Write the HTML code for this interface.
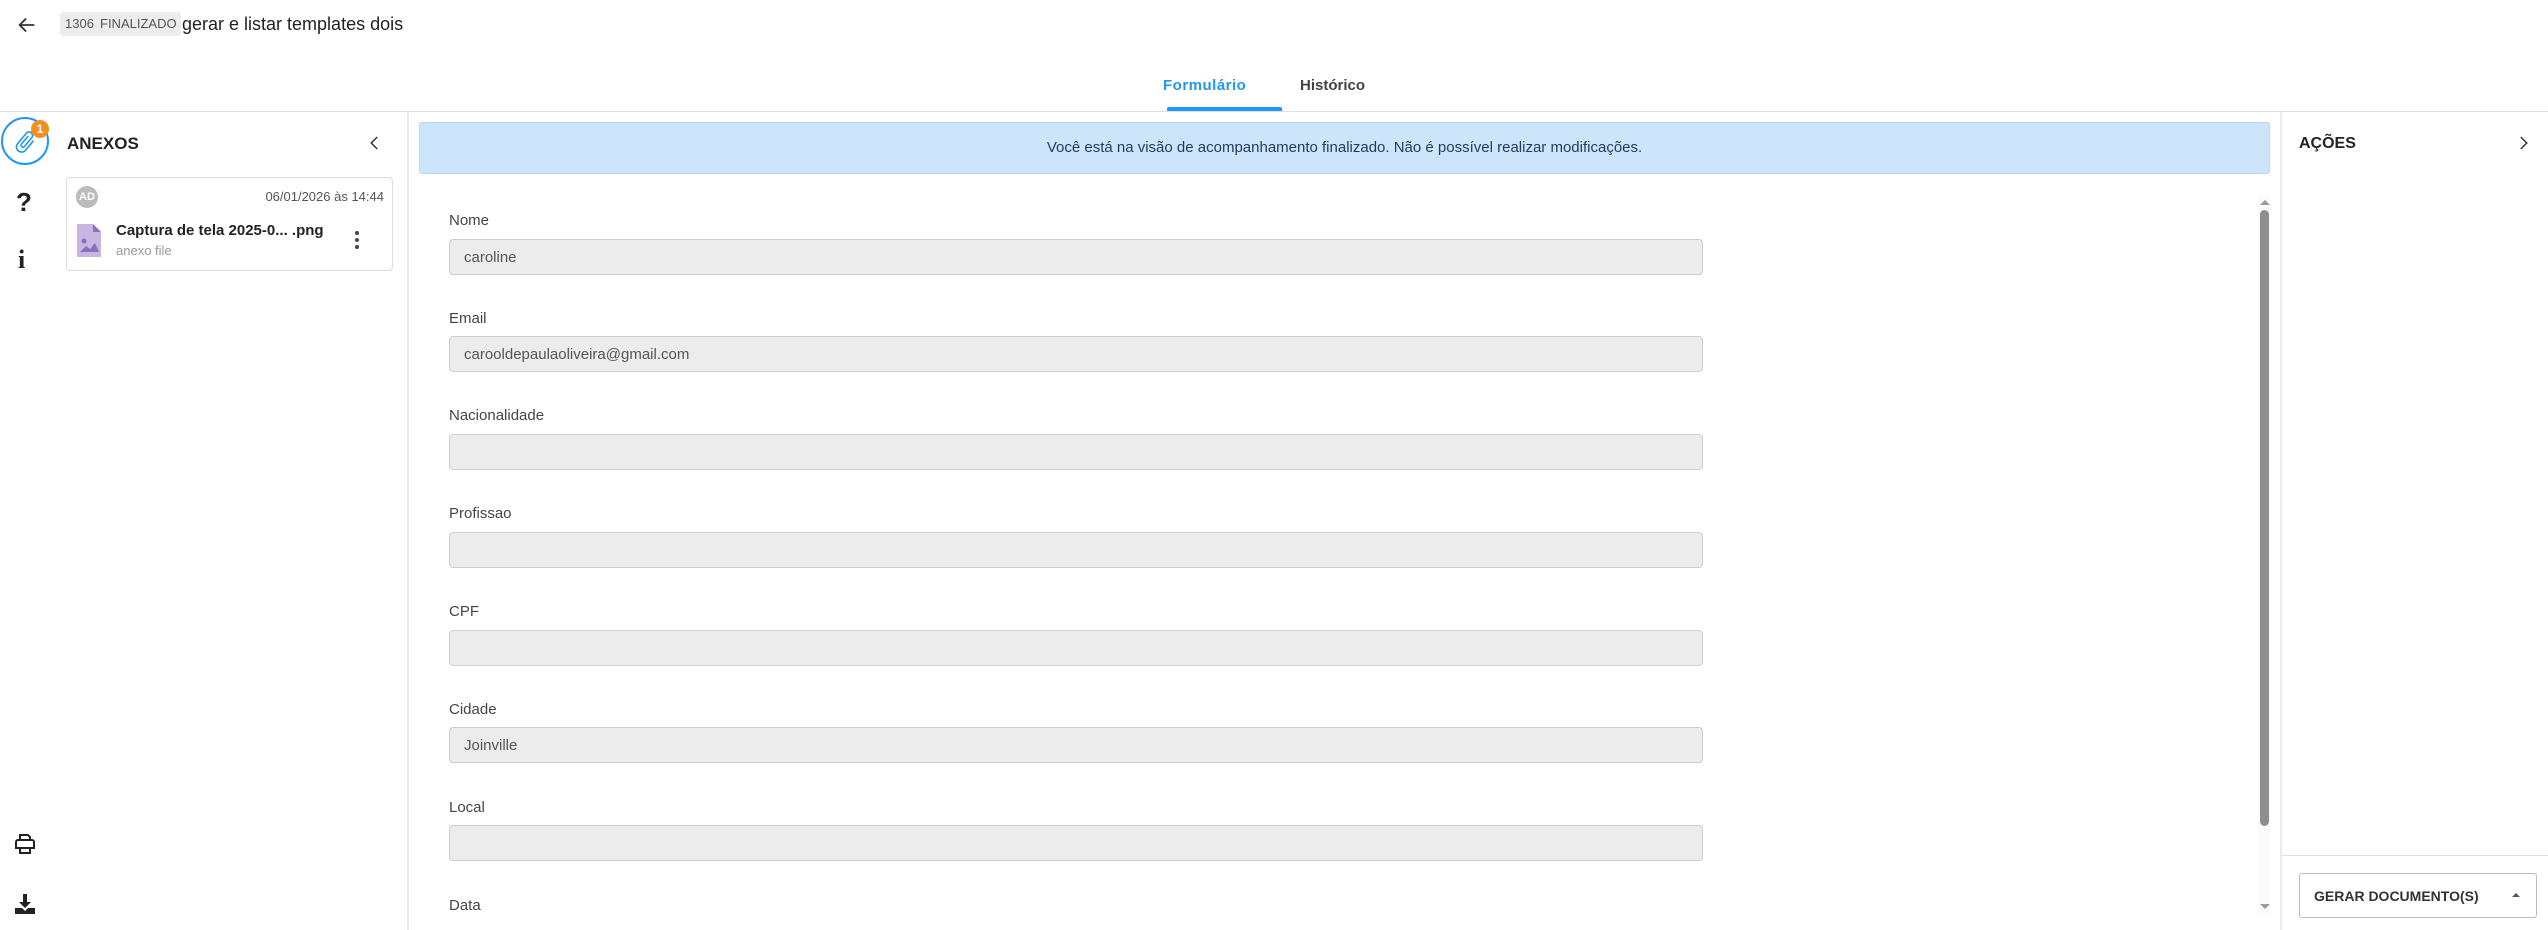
<!DOCTYPE html>
<html><head><meta charset="utf-8"><style>
*{box-sizing:border-box;margin:0;padding:0}
body{width:2548px;height:930px;overflow:hidden;background:#fff;font-family:"Liberation Sans",Arial,sans-serif;color:#333;position:relative}
.a{position:absolute}
.lbl{position:absolute;left:449px;font-size:15px;color:#444}
.inp{position:absolute;left:449px;width:1254px;height:36px;background:#ececec;border:1px solid #cfcfcf;border-radius:4px;font-size:15px;color:#555;padding:9px 0 0 14px}
</style></head><body>
<svg class="a" style="left:16px;top:14px" width="22" height="22" viewBox="0 0 24 24"><path d="M20 12H5M11 5l-7 7 7 7" stroke="#333" stroke-width="2" fill="none"/></svg>
<div class="a" style="left:60px;top:12px;height:24px;background:#ececec;border-radius:4px;font-size:13px;color:#555;padding:5px 5px;line-height:14px">1306</div>
<div class="a" style="left:96px;top:12px;height:24px;background:#ececec;border-radius:4px;font-size:13px;color:#555;padding:5px 4px;line-height:14px">FINALIZADO</div>
<div class="a" style="left:182px;top:12px;font-size:18px;color:#222;line-height:24px">gerar e listar templates dois</div>
<div class="a" style="left:1163px;top:77px;font-size:15px;color:#2196f3;font-weight:bold;letter-spacing:0.5px">Formulário</div>
<div class="a" style="left:1300px;top:77px;font-size:15px;color:#444;font-weight:bold">Histórico</div>
<div class="a" style="left:1167px;top:107px;width:115px;height:4px;background:#2196f3;border-radius:2px 2px 0 0"></div>
<div class="a" style="left:0;top:111px;width:2548px;height:1px;background:#e0e0e0"></div>
<div class="a" style="left:1px;top:117px;height:48px;border:2px solid #2196f3;border-radius:50%;width:48px"></div>
<svg class="a" style="left:12px;top:129px" width="26" height="26" viewBox="0 0 24 24"><path d="M16.5 6v11.5a4 4 0 0 1-8 0V5a2.5 2.5 0 0 1 5 0v10.5a1 1 0 0 1-2 0V6H10v9.5a2.5 2.5 0 0 0 5 0V5a4 4 0 0 0-8 0v12.5a5.5 5.5 0 0 0 11 0V6z" fill="#2196f3" transform="rotate(40 12 12)"/></svg>
<div class="a" style="left:31px;top:120px;width:18px;height:18px;border-radius:50%;background:#f5901e;color:#fff;font-size:12px;font-weight:bold;text-align:center;line-height:18px">1</div>
<div class="a" style="left:16px;top:187px;font-size:26px;font-weight:bold;color:#222">?</div>
<div class="a" style="left:18px;top:245px;font-size:26px;font-weight:bold;color:#222;font-family:'Liberation Serif',serif">i</div>
<svg class="a" style="left:13px;top:832px" width="24" height="24" viewBox="0 0 24 24"><path d="M7 8V3h8l2 2v3M5 8h14a2 2 0 0 1 2 2v6h-4v5H7v-5H3v-6a2 2 0 0 1 2-2zM7 16h10" stroke="#222" stroke-width="2" fill="none"/></svg>
<svg class="a" style="left:13px;top:892px" width="24" height="24" viewBox="0 0 24 24"><path d="M10 2h4v8h4l-6 6-6-6h4zM2 16h7l3 3 3-3h7v6H2z" fill="#222"/></svg>
<div class="a" style="left:67px;top:134px;font-size:17px;font-weight:bold;color:#222">ANEXOS</div>
<svg class="a" style="left:366px;top:134px" width="18" height="18" viewBox="0 0 24 24"><path d="M15 4l-8 8 8 8" stroke="#333" stroke-width="2" fill="none"/></svg>
<div class="a" style="left:66px;top:177px;width:327px;height:94px;border:1px solid #ddd;border-radius:4px"></div>
<div class="a" style="left:76px;top:186px;width:22px;height:22px;border-radius:50%;background:#bbb;color:#fff;font-size:11px;font-weight:bold;text-align:center;line-height:22px">AD</div>
<div class="a" style="left:240px;top:189px;width:144px;text-align:right;font-size:13px;color:#555">06/01/2026 às 14:44</div>
<svg class="a" style="left:77px;top:224px" width="24" height="33" viewBox="0 0 24 33"><path d="M0 0h16l8 8v25H0z" fill="#c8b6e2"/><path d="M16 0v8h8z" fill="#8a6fbf"/><circle cx="7" cy="17" r="2.5" fill="#8a6fbf"/><path d="M3 28l6-6 4 3 5-6 4 9z" fill="#8a6fbf"/></svg>
<div class="a" style="left:116px;top:222px;font-size:15px;font-weight:bold;color:#222">Captura de tela 2025-0... .png</div>
<div class="a" style="left:116px;top:243px;font-size:13px;color:#999">anexo file</div>
<div class="a" style="left:355px;top:231px;width:4px;height:4px;border-radius:50%;background:#444;box-shadow:0 7px 0 #444,0 14px 0 #444"></div>
<div class="a" style="left:407px;top:112px;width:2px;height:818px;background:#ececec"></div>
<div class="a" style="left:419px;top:122px;width:1851px;height:52px;background:#cce5fb;border:1px solid #b6d8f8;border-radius:3px;text-align:center;font-size:15px;color:#1f3c5c;line-height:50px">Você está na visão de acompanhamento finalizado. Não é possível realizar modificações.</div>
<div class="lbl" style="top:212px">Nome</div><div class="inp" style="top:239px">caroline</div>
<div class="lbl" style="top:310px">Email</div><div class="inp" style="top:336px">carooldepaulaoliveira@gmail.com</div>
<div class="lbl" style="top:407px">Nacionalidade</div><div class="inp" style="top:434px"></div>
<div class="lbl" style="top:505px">Profissao</div><div class="inp" style="top:532px"></div>
<div class="lbl" style="top:603px">CPF</div><div class="inp" style="top:630px"></div>
<div class="lbl" style="top:701px">Cidade</div><div class="inp" style="top:727px">Joinville</div>
<div class="lbl" style="top:799px">Local</div><div class="inp" style="top:825px"></div>
<div class="lbl" style="top:897px">Data</div>
<div class="a" style="left:2258px;top:195px;width:12px;height:720px;background:#fafafa"></div>
<div class="a" style="left:2260px;top:200px;width:0;height:0;border-left:5px solid transparent;border-right:5px solid transparent;border-bottom:5px solid #999"></div>
<div class="a" style="left:2260px;top:210px;width:9px;height:616px;background:#8e8e8e;border-radius:5px"></div>
<div class="a" style="left:2260px;top:904px;width:0;height:0;border-left:5px solid transparent;border-right:5px solid transparent;border-top:5px solid #999"></div>
<div class="a" style="left:2280px;top:112px;width:2px;height:818px;background:#ececec"></div>
<div class="a" style="left:2299px;top:135px;font-size:16px;font-weight:bold;color:#222">AÇÕES</div>
<svg class="a" style="left:2514px;top:134px" width="18" height="18" viewBox="0 0 24 24"><path d="M9 4l8 8-8 8" stroke="#333" stroke-width="2" fill="none"/></svg>
<div class="a" style="left:2282px;top:855px;width:266px;height:1px;background:#e0e0e0"></div>
<div class="a" style="left:2299px;top:873px;width:238px;height:45px;border:1px solid #bbb;border-radius:3px;font-size:14px;font-weight:bold;color:#333;padding:14px 0 0 14px">GERAR DOCUMENTO(S)</div>
<div class="a" style="left:2512px;top:893px;width:0;height:0;border-left:4px solid transparent;border-right:4px solid transparent;border-bottom:4px solid #555"></div>
</body></html>
